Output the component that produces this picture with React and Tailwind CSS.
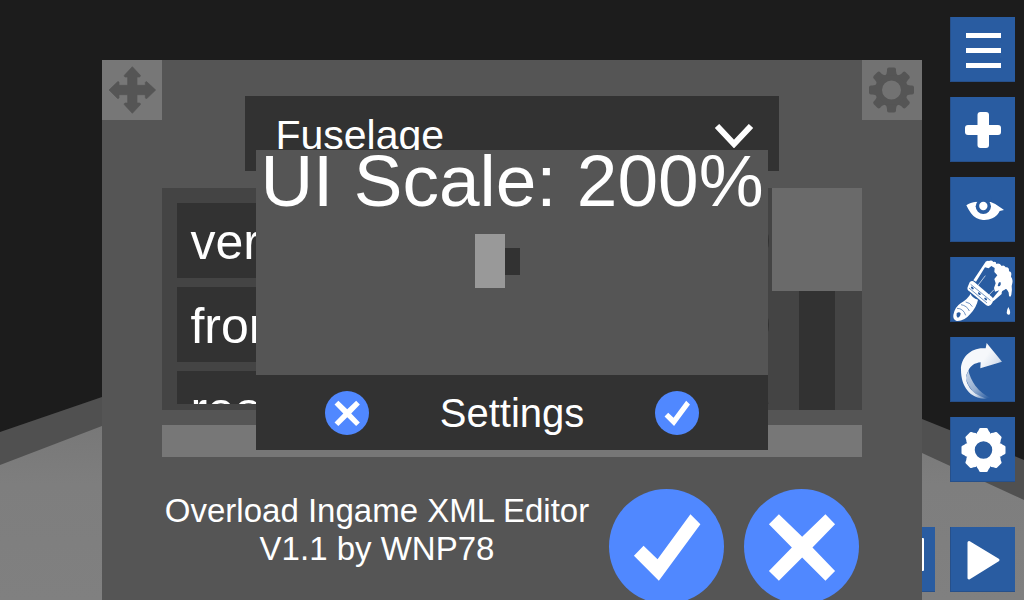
import React from "react";

const TEETH = [0, 45, 90, 135, 180, 225, 270, 315];

function Backdrop() {
  return (
    <svg
      className="absolute inset-0 h-full w-full"
      viewBox="0 0 1024 600"
      preserveAspectRatio="none"
      aria-hidden="true"
    >
      <defs>
        <linearGradient id="floor" x1="0" y1="0" x2="0" y2="1">
          <stop offset="0" stopColor="#727272" />
          <stop offset="0.5" stopColor="#7e7e7e" />
          <stop offset="1" stopColor="#808080" />
        </linearGradient>
      </defs>
      <path d="M0 432 L102 397 Q512 260 922 419 L1024 460 V600 H0Z" fill="#505050" />
      <path d="M0 465 L102 426 Q512 300 922 453 L1024 500 V600 H0Z" fill="url(#floor)" />
    </svg>
  );
}

function MenuIcon() {
  return (
    <svg viewBox="0 0 65 65" className="h-full w-full" fill="#fff" aria-hidden="true">
      <path d="M16 16h35v5H16zM16 31h35v5H16zM16 46h35v5H16z" />
    </svg>
  );
}

function PlusIcon() {
  return (
    <svg viewBox="0 0 65 65" className="h-full w-full" fill="#fff" aria-hidden="true">
      <rect x="27.500" y="15" width="11.500" height="36" rx="3" />
      <rect x="15" y="28" width="36" height="10" rx="3" />
    </svg>
  );
}

function EyeIcon() {
  return (
    <svg viewBox="0 0 195 195" className="h-full w-full" aria-hidden="true">
      <path
        d="M49 85Q60 76 80 74L122 75Q136 79 149 90Q156 95 162 99L149 102Q142 118 127 124Q115 130 99 129Q76 127 63 109Q55 98 49 85Z"
        fill="#fff"
      />
      <circle cx="100" cy="88" r="23" fill="#295ca1" />
      <path d="M78 60H124V74H78Z" fill="#295ca1" />
      <circle cx="100" cy="87" r="12.500" fill="#fff" />
    </svg>
  );
}

function BrushIcon() {
  return (
    <svg viewBox="0 0 195 195" className="h-full w-full" aria-hidden="true">
      <path
        d="M62 110Q66 122 84 128Q80 150 60 172Q43 193 20 192Q8 188 10 174Q14 150 33 138Q53 126 62 110Z"
        fill="#fff"
      />
      <g fill="none" stroke="#295ca1" strokeWidth="2">
        <path d="M21 154Q40 154 47 175M33 143Q51 146 58 162M47 135Q61 137 67 149" />
      </g>
      <path d="M20 169Q27 162 32 169Q31 181 23 182Q18 177 20 169Z" fill="#295ca1" />
      <path
        d="M70 70L103 20Q108 9 117 12Q125 8 130 15Q139 13 139 21Q148 17 155 27Q162 23 167 31Q178 29 177 43Q187 44 183 59Q191 68 185 87Q187 99 184 113Q181 124 177 116Q177 104 173 101Q169 92 163 99Q154 101 155 111L130 133L126 127L148 100L135 104L132 93L137 79L133 66L142 55L133 45L134 33L124 27L116 34L105 31L78 74Z"
        fill="#fff"
      />
      <path d="M77 94L106 56M113 118L132 98" stroke="#fff" strokeWidth="2" />
      <path d="M146 77Q154 71 152 83Q148 91 143 86Z" fill="#295ca1" />
      <path d="M59 76Q66 69 73 75L126 120Q133 127 127 137Q120 151 109 145L58 103Q50 98 53 90Z" fill="#fff" />
      <path d="M62 82L121 130M57 93L111 138" fill="none" stroke="#295ca1" strokeWidth="2" />
      <g fill="#295ca1">
        <ellipse cx="67" cy="93" rx="5" ry="3" transform="rotate(40 67 93)" />
        <ellipse cx="88" cy="110" rx="5" ry="3" transform="rotate(40 88 110)" />
        <ellipse cx="107" cy="126" rx="5" ry="3" transform="rotate(40 107 126)" />
      </g>
      <path d="M175 150Q184 167 178 173Q172 175 170 168Q170 160 175 150Z" fill="#fff" />
    </svg>
  );
}

function RedoIcon() {
  return (
    <svg viewBox="0 0 195 195" className="h-full w-full" aria-hidden="true">
      <defs>
        <linearGradient id="tail" gradientUnits="userSpaceOnUse" x1="56" y1="110" x2="118" y2="184">
          <stop offset="0" stopColor="#fff" stopOpacity="0.7" />
          <stop offset="0.5" stopColor="#fff" stopOpacity="0.5" />
          <stop offset="1" stopColor="#fff" stopOpacity="0" />
        </linearGradient>
        <linearGradient id="rim" gradientUnits="userSpaceOnUse" x1="50" y1="140" x2="116" y2="186">
          <stop offset="0" stopColor="#f6f8fb" />
          <stop offset="0.5" stopColor="#f6f8fb" stopOpacity="0.85" />
          <stop offset="1" stopColor="#f6f8fb" stopOpacity="0" />
        </linearGradient>
      </defs>
      <path d="M55 100Q60 124 76 146Q94 170 124 184L100 184Q60 168 47 124Z" fill="url(#tail)" />
      <path
        d="M33 98C32 60 66 29 107 34L110 18L156 74L91 94L92 76C74 78 62 86 55 101C46 116 47 128 54 143C64 163 84 178 112 185C60 187 33 148 33 98Z"
        fill="url(#rim)"
      />
    </svg>
  );
}

function WideGearIcon() {
  return (
    <svg viewBox="0 0 65 65" className="h-full w-full" aria-hidden="true">
      <g transform="translate(33.5 33)">
        <circle r="13" fill="none" stroke="#fff" strokeWidth="8.500" />
        {TEETH.map((angle) => (
          <path
            key={angle}
            d="M-7 -14.500L-6.500 -17.500Q-5 -19 -4.200 -21.200Q-4 -22 -3 -22H3Q4 -22 4.200 -21.200Q5 -19 6.500 -17.500L7 -14.500Z"
            fill="#fff"
            transform={`rotate(${angle})`}
          />
        ))}
      </g>
    </svg>
  );
}

function PlayIcon() {
  return (
    <svg viewBox="0 0 65 65" className="h-full w-full" aria-hidden="true">
      <path d="M19 15.500L48 33L19 51Z" fill="#fff" stroke="#fff" strokeWidth="3" strokeLinejoin="round" />
    </svg>
  );
}

function FrameIcon() {
  return (
    <svg viewBox="0 0 65 65" className="h-full w-full" aria-hidden="true">
      <rect x="12" y="11" width="42" height="33" rx="1" fill="#fff" />
    </svg>
  );
}

function MoveIcon() {
  return (
    <svg viewBox="0 0 180 180" className="h-full w-full" aria-hidden="true">
      <path
        d="M91 20L115 46Q116 50 112 51H105V76H130V67Q132 63 135 66L161 90L135 115Q131 117 130 113V104H105V129H112Q117 130 115 134L91 160L67 134Q65 130 70 129H77V104H51V113Q50 117 46 115L21 90L46 66Q50 63 51 67V76H77V51H70Q65 50 67 46Z"
        fill="#555"
        stroke="#555"
        strokeWidth="2"
        strokeLinejoin="round"
      />
    </svg>
  );
}

function GearIcon() {
  return (
    <svg viewBox="0 0 60 60" className="h-full w-full" aria-hidden="true">
      <g transform="translate(29.500 30)">
        <circle r="12.800" fill="none" stroke="#555" strokeWidth="6.600" />
        {TEETH.map((angle) => (
          <path
            key={angle}
            d="M-6.500 -14.500Q-4.500 -16 -4.500 -19V-20.500Q-4.500 -22.500 -2.500 -22.500H2.500Q4.500 -22.500 4.500 -20.500V-19Q4.500 -16 6.500 -14.500Z"
            fill="#555"
            transform={`rotate(${angle})`}
          />
        ))}
      </g>
    </svg>
  );
}

function CheckGlyph() {
  return (
    <svg viewBox="0 0 346 346" className="h-full w-full" aria-hidden="true">
      <path d="M75 201L104 171L146 211L245 76L275 106L150 276Z" fill="#fff" />
    </svg>
  );
}

function CrossGlyph() {
  return (
    <svg viewBox="0 0 346 346" className="h-full w-full" aria-hidden="true">
      <path
        d="M75 106L105 76L175 144L245 76L274 106L206 176L274 247L245 276L175 206L105 276L75 247L144 176Z"
        fill="#fff"
      />
    </svg>
  );
}

function ToolButton({ label, children }) {
  return (
    <button
      type="button"
      aria-label={label}
      className="block size-[65px] shrink-0 bg-[#295ca1] shadow-[inset_1px_-1px_0_0_#27508a]"
    >
      {children}
    </button>
  );
}

function RoundButton({ label, size, children }) {
  return (
    <button type="button" aria-label={label} className={`block shrink-0 rounded-full bg-[#5088ff] ${size}`}>
      {children}
    </button>
  );
}

function Toolbar() {
  return (
    <nav aria-label="Tools" className="absolute inset-0 flex flex-col items-end justify-between pt-[17px] pr-[9px] pb-2">
      <div className="flex flex-col gap-[15px]">
        <ToolButton label="Menu"><MenuIcon /></ToolButton>
        <ToolButton label="Add part"><PlusIcon /></ToolButton>
        <ToolButton label="View"><EyeIcon /></ToolButton>
        <ToolButton label="Paint"><BrushIcon /></ToolButton>
        <ToolButton label="Redo"><RedoIcon /></ToolButton>
        <ToolButton label="Options"><WideGearIcon /></ToolButton>
      </div>
      <div className="flex gap-[15px]">
        <ToolButton label="Frame"><FrameIcon /></ToolButton>
        <ToolButton label="Play"><PlayIcon /></ToolButton>
      </div>
    </nav>
  );
}

function PropertyRow({ name }) {
  return (
    <li className="flex shrink-0 items-center gap-3">
      <button type="button" className="h-[75px] grow bg-[#323232] px-[13px] pt-1 text-left text-[50px] leading-[71px] text-white">
        {name}
      </button>
      <button type="button" aria-label={`Remove ${name}`} className="size-14 rounded-full bg-[#323232]" />
    </li>
  );
}

function EditorPanel() {
  return (
    <div className="absolute inset-0 flex justify-center overflow-hidden pt-15">
      <section aria-label="XML editor" className="w-4/5 bg-[#555]">
        <header className="flex items-start">
          <button type="button" aria-label="Move" className="size-15 shrink-0 bg-[#777]">
            <MoveIcon />
          </button>
          <div className="mx-[83px] mt-9 grid h-[75px] grow items-center bg-[#323232]">
            <select
              aria-label="Section"
              className="col-start-1 row-start-1 h-full w-full appearance-none bg-transparent pt-1 pr-16 pl-[30px] text-[41px] text-white"
            >
              <option>Fuselage</option>
            </select>
            <svg
              viewBox="0 0 40 24"
              className="pointer-events-none col-start-1 row-start-1 mt-1 mr-[25px] h-6 w-10 justify-self-end"
              aria-hidden="true"
            >
              <path d="M3 2L20 20L37 2" fill="none" stroke="#fff" strokeWidth="6" />
            </svg>
          </div>
          <button type="button" aria-label="Editor settings" className="size-15 shrink-0 bg-[#727272]">
            <GearIcon />
          </button>
        </header>

        <div className="mt-[17px] px-15">
          <div className="flex h-[222px] bg-[#444]">
            <div className="grow pt-[15px] pr-[3px] pb-[6px] pl-[15px]">
              <ul className="flex h-full flex-col gap-[9px] overflow-hidden">
                <PropertyRow name="vert" />
                <PropertyRow name="front" />
                <PropertyRow name="rear" />
              </ul>
            </div>
            <div className="flex w-[90px] shrink-0 flex-col items-center">
              <div className="h-[103px] w-full bg-[#6a6a6a]" />
              <div className="w-9 grow bg-[#323232]" />
            </div>
          </div>

          <div className="mt-[15px] h-8 bg-[#777]" />

          <footer className="mt-8 flex gap-[17px] pr-[3px]">
            <p className="grow pt-[3px] text-center text-[33px] leading-[38px] text-white">
              Overload Ingame XML Editor
              <br />
              V1.1 by WNP78
            </p>
            <div className="flex gap-5">
              <RoundButton label="Accept" size="size-[115px]"><CheckGlyph /></RoundButton>
              <RoundButton label="Cancel" size="size-[115px]"><CrossGlyph /></RoundButton>
            </div>
          </footer>
        </div>
      </section>
    </div>
  );
}

function SettingsDialog() {
  return (
    <div className="absolute inset-0 flex items-center justify-center">
      <section role="dialog" aria-label="Settings" className="flex h-1/2 w-1/2 flex-col bg-[#555]">
        <div className="flex grow flex-col items-center">
          <label htmlFor="ui-scale" className="text-[73px] leading-[62px] whitespace-nowrap text-white">
            UI Scale: 200%
          </label>
          <input
            id="ui-scale"
            type="range"
            min="50"
            max="200"
            defaultValue="50"
            className="mt-[22px] mr-[30px] h-[54px] w-[45px] appearance-none bg-transparent [&::-webkit-slider-runnable-track]:h-[27px] [&::-webkit-slider-runnable-track]:bg-[#323232] [&::-webkit-slider-thumb]:-mt-3.5 [&::-webkit-slider-thumb]:h-[54px] [&::-webkit-slider-thumb]:w-[30px] [&::-webkit-slider-thumb]:appearance-none [&::-webkit-slider-thumb]:bg-[#999]"
          />
        </div>
        <div className="flex h-[75px] items-center justify-between bg-[#323232] px-[69px]">
          <RoundButton label="Close settings" size="size-11"><CrossGlyph /></RoundButton>
          <h2 className="text-[40px] leading-[48px] text-white">Settings</h2>
          <RoundButton label="Apply settings" size="size-11"><CheckGlyph /></RoundButton>
        </div>
      </section>
    </div>
  );
}

export default function App() {
  return (
    <main className="relative h-screen min-h-[600px] overflow-hidden bg-[#1c1c1c] font-['Liberation_Sans',Arial,sans-serif]">
      <Backdrop />
      <Toolbar />
      <EditorPanel />
      <SettingsDialog />
    </main>
  );
}
